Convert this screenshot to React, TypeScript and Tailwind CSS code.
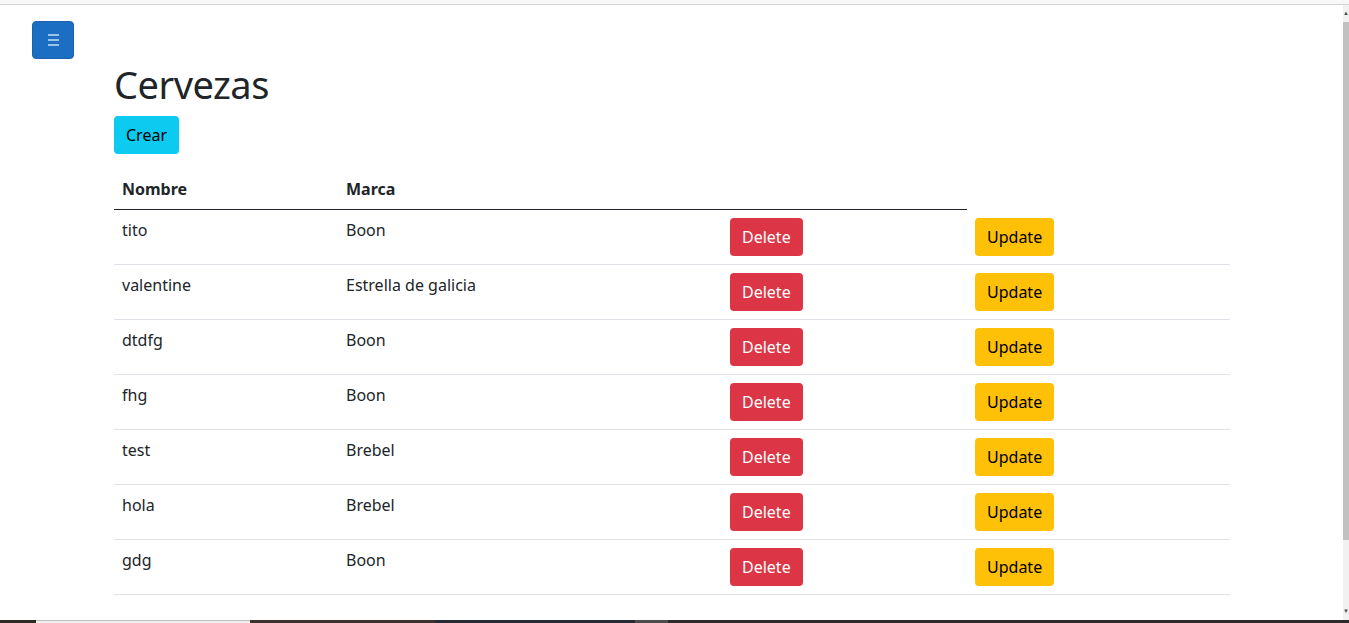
import React from "react";

const cervezas = [
  { nombre: "tito", marca: "Boon" },
  { nombre: "valentine", marca: "Estrella de galicia" },
  { nombre: "dtdfg", marca: "Boon" },
  { nombre: "fhg", marca: "Boon" },
  { nombre: "test", marca: "Brebel" },
  { nombre: "hola", marca: "Brebel" },
  { nombre: "gdg", marca: "Boon" },
];

export default function App() {
  return (
    <div
      className="h-[623px] flex flex-col overflow-hidden bg-white text-[#212529]"
      style={{ fontFamily: '"Noto Sans", "Open Sans", sans-serif' }}
    >
      <div className="h-[4px] bg-[#f7f7f7]" />
      <div className="h-px bg-[#d2d2d2]" />
      <div className="flex flex-1 min-h-0">
        <main className="flex-1 min-w-0">
          <div className="pt-4 pl-8">
            <button className="w-[42px] h-[38px] rounded bg-[#1b6ec2] border border-[#1861ac] flex flex-col items-center justify-center gap-[3px]">
              <span className="block w-[11px] h-[2px] bg-[#9cc0e6]" />
              <span className="block w-[11px] h-[2px] bg-[#9cc0e6]" />
              <span className="block w-[11px] h-[2px] bg-[#9cc0e6]" />
            </button>
          </div>
          <div className="pl-[114px] pr-[113px] pt-px">
            <h1 className="text-[38px] leading-[48px] tracking-[-0.5px] font-normal mb-2">Cervezas</h1>
            <button className="h-[38px] px-3 rounded bg-[#0dcaf0] text-black text-base">Crear</button>
            <table className="w-full mt-[15px] border-collapse text-base">
              <thead>
                <tr>
                  <th className="w-[224px] text-left font-bold px-2 py-2 leading-6 border-b border-[#212529]">Nombre</th>
                  <th className="w-[384px] text-left font-bold px-2 py-2 leading-6 border-b border-[#212529]">Marca</th>
                  <th className="w-[245px] px-2 py-2 border-b border-[#212529]"></th>
                </tr>
              </thead>
              <tbody>
                {cervezas.map((c) => (
                  <tr key={c.nombre} className="border-b border-[#dee2e6]">
                    <td className="px-2 py-2 align-top leading-6 h-[54px]">{c.nombre}</td>
                    <td className="px-2 py-2 align-top leading-6">{c.marca}</td>
                    <td className="px-2 py-2 align-top">
                      <button className="h-[38px] px-3 rounded bg-[#dc3545] text-white">Delete</button>
                    </td>
                    <td className="px-2 py-2 align-top">
                      <button className="h-[38px] px-3 rounded bg-[#ffc107] text-black">Update</button>
                    </td>
                  </tr>
                ))}
              </tbody>
            </table>
          </div>
        </main>
        <div className="w-[6px] flex flex-col bg-[#f1f1f1]">
          <div className="h-[17px] flex items-center justify-center text-[6px] text-[#505050]">▲</div>
          <div className="h-[518px] bg-[#c1c1c1]" />
          <div className="flex-1" />
          <div className="h-[17px] flex items-center justify-center text-[6px] text-[#505050]">▼</div>
        </div>
      </div>
      <div className="h-[3px] flex">
        <div className="w-[36px] bg-[#2c2a22]" />
        <div className="w-[214px] bg-[#efefef] border-t border-[#bdbdbd]" />
        <div className="w-[185px] bg-[#3a302c]" />
        <div className="w-[200px] bg-[#252a33]" />
        <div className="w-[33px] bg-[#4c4c4c]" />
        <div className="flex-1 bg-[#2d2a2c]" />
      </div>
    </div>
  );
}
